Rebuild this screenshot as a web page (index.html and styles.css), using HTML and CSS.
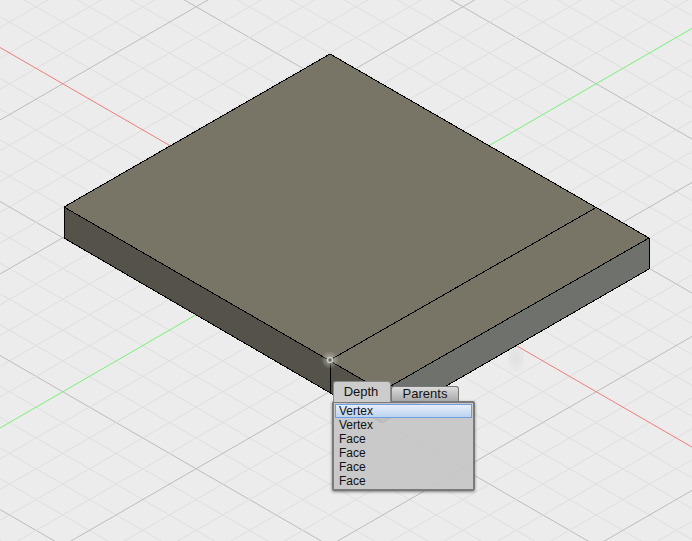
FILE: index.html
```html
<!DOCTYPE html>
<html lang="en">
<head>
    <meta charset="UTF-8">
    <title>Select Other</title>
    <link rel="stylesheet" href="styles.css">
</head>
<body>
    <main class="viewport">
        <svg class="scene" width="692" height="541" viewBox="0 0 692 541">
            <defs>
                <filter id="soft"><feGaussianBlur stdDeviation="5"></feGaussianBlur></filter>
                <radialGradient id="glow">
                    <stop offset="0" stop-color="#d8d8d0" stop-opacity="0.6"></stop>
                    <stop offset="0.55" stop-color="#d8d8d0" stop-opacity="0.3"></stop>
                    <stop offset="1" stop-color="#d8d8d0" stop-opacity="0"></stop>
                </radialGradient>
            </defs>

            <!-- ground grid, filled in by grid.js -->
            <g id="grid"></g>
            <ellipse class="smudge" cx="516" cy="358" rx="6" ry="12" filter="url(#soft)"></ellipse>

            <!-- plate -->
            <polygon class="face-top" points="330,54 649,238 382,391 64,207"></polygon>
            <polygon class="face-left" points="64,207 382,391 382,423 64,238"></polygon>
            <polygon class="face-right" points="649,238 649,269 382,423 382,391"></polygon>

            <g class="edges">
                <polygon points="330,54 649,238 382,391 64,207"></polygon>
                <line x1="64" y1="207" x2="64" y2="238"></line>
                <line x1="649" y1="238" x2="649" y2="269"></line>
                <line x1="64" y1="238" x2="382" y2="423"></line>
                <line x1="649" y1="269" x2="382" y2="423"></line>
                <line x1="330" y1="360" x2="597" y2="207"></line>
                <line x1="330" y1="360" x2="330" y2="392"></line>
            </g>

            <!-- hovered vertex -->
            <circle cx="330" cy="360" r="9" fill="url(#glow)"></circle>
            <circle class="vertex" cx="330" cy="360" r="2.5"></circle>
        </svg>

        <div class="picker">
            <div class="tabs">
                <div class="tab active">Depth</div>
                <div class="tab">Parents</div>
            </div>
            <ul class="list">
                <li class="selected">Vertex</li>
                <li>Vertex</li>
                <li>Face</li>
                <li>Face</li>
                <li>Face</li>
                <li>Face</li>
            </ul>
        </div>
    </main>

    <script src="grid.js"></script>
</body>
</html>
```

FILE: styles.css
```css
body {
    margin: 0;
    background: #ececec;
    font-family: "Liberation Sans", Arial, sans-serif;
    color: #111;
}

.viewport {
    position: relative;
    width: 692px;
    height: 541px;
    overflow: hidden;
}

.scene {
    display: block;
}

/* Grid */
.minor { stroke: #dedede; stroke-width: 1; }
.major { stroke: #bcbcbc; stroke-width: 1; }
.axis-x { stroke: #f27c7c; stroke-width: 1; }
.axis-y { stroke: #78f078; stroke-width: 1; }

.smudge {
    fill: #d2d2d2;
    opacity: 0.5;
}

/* Plate */
.face-top { fill: #787466; }
.face-left { fill: #55524a; }
.face-right { fill: #6f716c; }

.edges {
    fill: none;
    stroke: #000;
    stroke-width: 1;
    shape-rendering: crispEdges;
}

.vertex {
    fill: #6b6860;
    stroke: #c9c9c4;
    stroke-width: 1.5;
}

/* Selection popup */
.picker {
    position: absolute;
    left: 332px;
    top: 382px;
    width: 143px;
}

.tabs {
    display: flex;
    align-items: flex-end;
    height: 19px;
    margin-left: 1px;
}

.tab {
    box-sizing: border-box;
    width: 68px;
    height: 15px;
    border: 1px solid #777;
    border-bottom: none;
    border-radius: 3px 3px 0 0;
    background: linear-gradient(#dcdcdc, #a9a9a9);
    font-size: 13px;
    line-height: 14px;
    text-align: center;
}

.tab.active {
    position: relative;
    z-index: 1;
    width: 58px;
    height: 21px;
    margin-bottom: -1px;
    padding-right: 2px;
    background: rgb(204, 204, 204);
    border-color: #8a8a8a;
    line-height: 19px;
}

.list {
    box-sizing: border-box;
    height: 90px;
    margin: 0;
    padding: 1px;
    list-style: none;
    background: rgba(198, 198, 198, 0.93);
    border: 2px solid #7a7a7a;
    border-radius: 2px;
    box-shadow: 0 1px 3px rgba(0, 0, 0, 0.45);
    font-size: 12px;
}

.list li {
    box-sizing: border-box;
    height: 14px;
    padding-left: 4px;
    line-height: 14px;
}

.list li.selected {
    border: 1px solid #6f9fe0;
    padding-left: 3px;
    line-height: 12px;
    background: linear-gradient(#e6eefa, #bcd3f0);
}
```

FILE: grid.js
```js
// Isometric ground grid: two families of lines, every 5th one darker
var svgNS = "http://www.w3.org/2000/svg";
var grid = document.getElementById("grid");
var slope = 0.5774, step = 30.8;
var redStart = 47.5, greenStart = 428;

function addLine(c, dir, cls) {
    var line = document.createElementNS(svgNS, "line");
    line.setAttribute("x1", 0);
    line.setAttribute("y1", c);
    line.setAttribute("x2", 692);
    line.setAttribute("y2", c + dir * slope * 692);
    line.setAttribute("class", cls);
    grid.appendChild(line);
}

function addFamily(start, dir) {
    var minor = [], major = [];
    for (var i = -30; i <= 30; i++) {
        if (i === 0) continue;
        (i % 5 === 0 ? major : minor).push(start + i * step);
    }
    minor.forEach(function (c) { addLine(c, dir, "minor"); });
    major.forEach(function (c) { addLine(c, dir, "major"); });
}

addFamily(redStart, 1);
addFamily(greenStart, -1);
addLine(redStart, 1, "axis-x");
addLine(greenStart, -1, "axis-y");
```
